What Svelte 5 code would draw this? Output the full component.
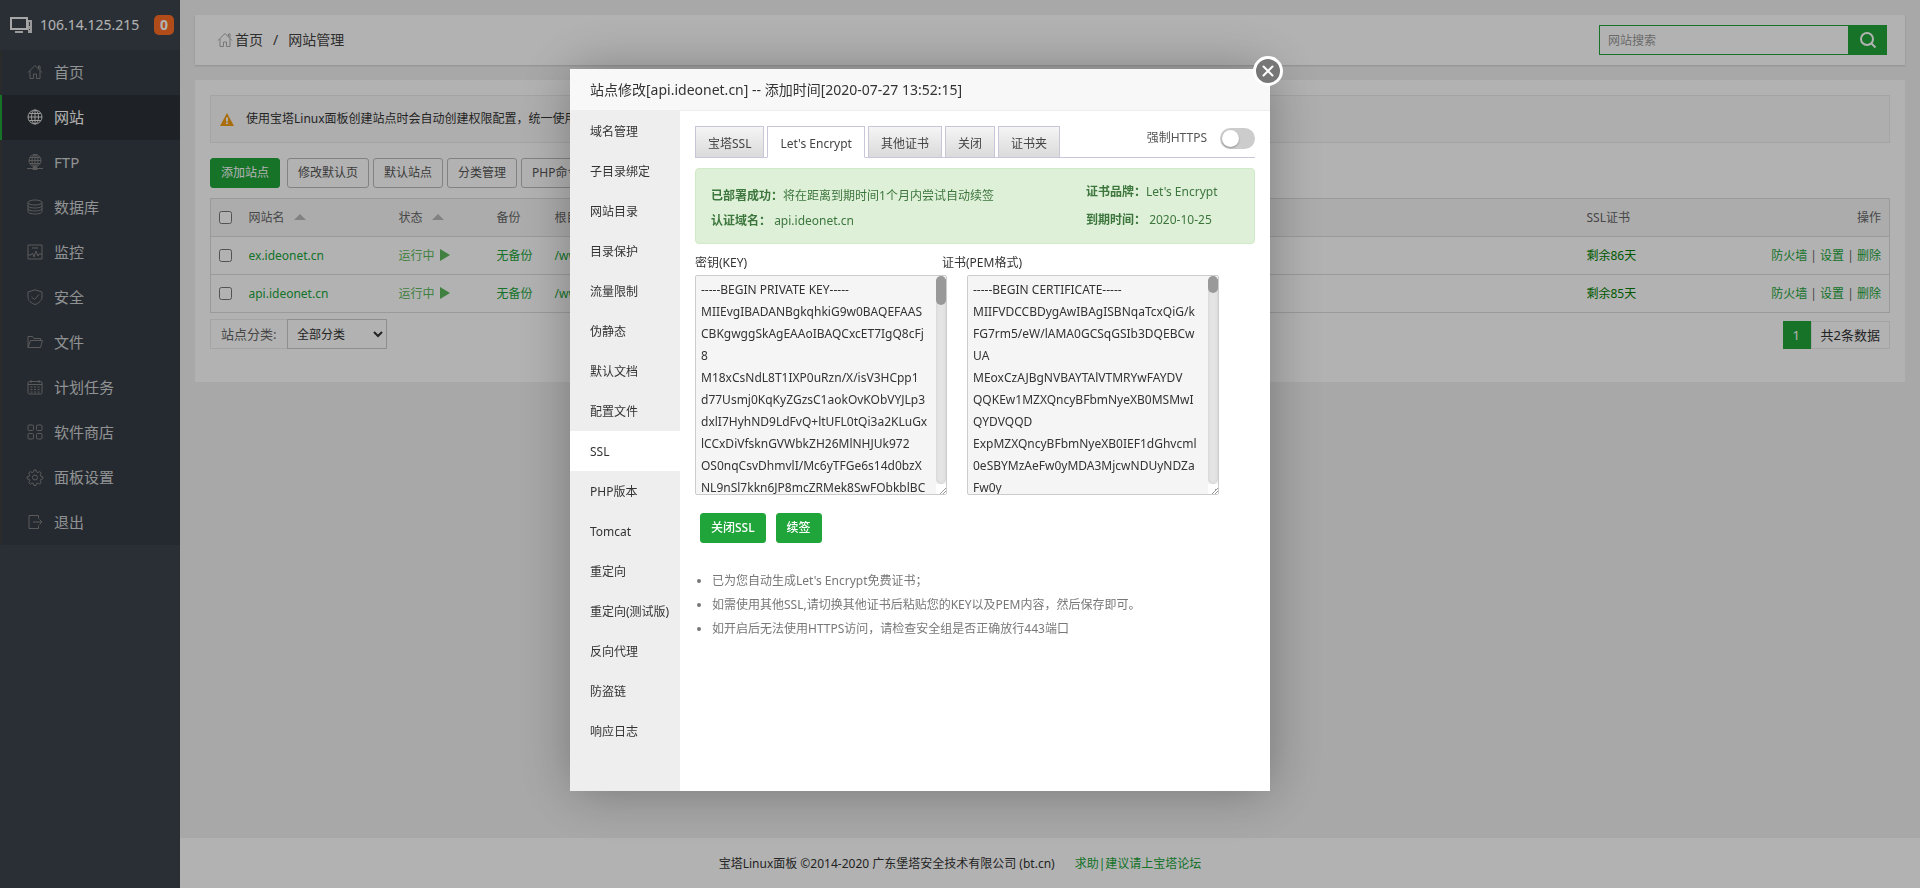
<script lang="ts">
	const menu = [
		{ name: '首页', icon: 'home' },
		{ name: '网站', icon: 'globe' },
		{ name: 'FTP', icon: 'ftp' },
		{ name: '数据库', icon: 'database' },
		{ name: '监控', icon: 'monitor' },
		{ name: '安全', icon: 'shield' },
		{ name: '文件', icon: 'folder' },
		{ name: '计划任务', icon: 'calendar' },
		{ name: '软件商店', icon: 'grid' },
		{ name: '面板设置', icon: 'gear' },
		{ name: '退出', icon: 'exit' }
	];

	const toolbar = ['修改默认页', '默认站点', '分类管理', 'PHP命令'];

	const sites = [
		{ name: 'ex.ideonet.cn', path: '/www', days: 86 },
		{ name: 'api.ideonet.cn', path: '/www', days: 85 }
	];

	const sections = [
		'域名管理',
		'子目录绑定',
		'网站目录',
		'目录保护',
		'流量限制',
		'伪静态',
		'默认文档',
		'配置文件',
		'SSL',
		'PHP版本',
		'Tomcat',
		'重定向',
		'重定向(测试版)',
		'反向代理',
		'防盗链',
		'响应日志'
	];

	const tabs = ['宝塔SSL', "Let's Encrypt", '其他证书', '关闭', '证书夹'];

	const tips = [
		"已为您自动生成Let's Encrypt免费证书；",
		'如需使用其他SSL,请切换其他证书后粘贴您的KEY以及PEM内容，然后保存即可。',
		'如开启后无法使用HTTPS访问，请检查安全组是否正确放行443端口'
	];

	const key = `-----BEGIN PRIVATE KEY-----
MIIEvgIBADANBgkqhkiG9w0BAQEFAAS
CBKgwggSkAgEAAoIBAQCxcET7IgQ8cFj
8
M18xCsNdL8T1IXP0uRzn/X/isV3HCpp1
d77Usmj0KqKyZGzsC1aokOvKObVYJLp3
dxlI7HyhND9LdFvQ+ltUFL0tQi3a2KLuGx
lCCxDiVfsknGVWbkZH26MlNHJUk972
OS0nqCsvDhmvlI/Mc6yTFGe6s14d0bzX
NL9nSl7kkn6JP8mcZRMek8SwFObkblBC`;

	const pem = `-----BEGIN CERTIFICATE-----
MIIFVDCCBDygAwIBAgISBNqaTcxQiG/k
FG7rm5/eW/lAMA0GCSqGSIb3DQEBCw
UA
MEoxCzAJBgNVBAYTAlVTMRYwFAYDV
QQKEw1MZXQncyBFbmNyeXB0MSMwI
QYDVQQD
ExpMZXQncyBFbmNyeXB0IEF1dGhvcml
0eSBYMzAeFw0yMDA3MjcwNDUyNDZa
Fw0y`;

	let activeMenu = $state('网站');
	let activeSection = $state('SSL');
	let activeTab = $state("Let's Encrypt");
	let forceHttps = $state(false);
</script>

{#snippet icon(name)}
	<svg class="icon" viewBox="0 0 16 16" aria-hidden="true">
		{#if name === 'home'}
			<path d="M1 8.5 8 1.5l7 7M3 7v7.5h3.5V10h3v4.5H13V7M11.5 4.500V2h1.500v4" />
		{:else if name === 'globe'}
			<circle cx="8" cy="8" r="7" />
			<ellipse cx="8" cy="8" rx="3.500" ry="7" />
			<path d="M8 1v14M1 8h14M2.200 4.500h11.600M2.200 11.500h11.600" />
		{:else if name === 'ftp'}
			<circle cx="8" cy="6.500" r="6" />
			<ellipse cx="8" cy="6.500" rx="3" ry="6" />
			<path d="M8 .5v14M2 6.500h12M3 3.500h10M3 9.500h10M0 14.500h16M6 13.500h4v2H6z" />
		{:else if name === 'database'}
			<ellipse cx="8" cy="3.500" rx="7" ry="2.500" />
			<path
				d="M1 3.500v9C1 14 4 15 8 15s7-1 7-2.500v-9M1 6.500C1 8 4 9 8 9s7-1 7-2.500M1 9.500C1 11 4 12 8 12s7-1 7-2.500"
			/>
		{:else if name === 'monitor'}
			<path d="M1 1h14v14H1zM5 4h6M1 11h3l1.500-2 1.500 4 2-6 2 5 1-2h3" />
		{:else if name === 'shield'}
			<path d="M8 .8 15 3v5c0 3.500-3 6-7 7.500C4 14 1 11.500 1 8V3zM4.500 8 7.500 10.500 12 5.500" />
		{:else if name === 'folder'}
			<path d="M1 13.500V2.500h4.500l1.500 2h6.500v2M1 13.500l2.500-7h12l-2 7z" />
		{:else if name === 'calendar'}
			<rect x="1" y="2.500" width="14" height="12.500" rx="1.500" />
			<path
				d="M1 5.500h14M4 1v3M12 1v3M3.500 8h2M7 8h2M10.500 8h2M3.500 10.500h2M7 10.500h2M10.500 10.500h2M3.500 13h2M7 13h2M10.500 13h2"
			/>
		{:else if name === 'grid'}
			<rect x="1" y="1" width="5.500" height="5.500" rx="1" />
			<rect x="9.500" y="1" width="5.500" height="5.500" rx="1" />
			<rect x="1" y="9.500" width="5.500" height="5.500" rx="1" />
			<rect x="9.500" y="9.500" width="5.500" height="5.500" rx="1" />
		{:else if name === 'gear'}
			<path
				d="M6.900 1h2.200l.4 2 1.500.6 1.700-1.100 1.600 1.600-1.100 1.700.6 1.500 2 .4v2.200l-2 .4-.6 1.500 1.100 1.700-1.600 1.600-1.700-1.100-1.500.6-.4 2H6.900l-.4-2-1.500-.6-1.700 1.100-1.600-1.600 1.100-1.700-.6-1.500-2-.4V7.700l2-.4.6-1.500-1.100-1.700 1.600-1.600L5 3.600 6.500 3z"
			/>
			<circle cx="8" cy="8.500" r="2.500" />
		{:else if name === 'exit'}
			<path d="M11.500 4.500V1.500H2v13h9.500v-3M6 8h9M12.500 5.500 15 8l-2.500 2.500" />
		{/if}
	</svg>
{/snippet}

<div class="page">
	<aside class="sidebar">
		<h3 class="server">
			<svg width="23" height="16" viewBox="0 0 23 16" aria-hidden="true">
				<rect x="1" y="1" width="16" height="11" fill="none" stroke="#eee" stroke-width="2" />
				<path d="M5 14h8v2H5zM18 3h4v13h-4z" fill="#ddd" />
				<path d="M19.500 5v4M19.500 12v1" stroke="#555" />
			</svg>
			<span class="ip">106.14.125.215</span>
			<span class="count">0</span>
		</h3>
		<nav>
			{#each menu as item}
				<a
					href="#{item.icon}"
					class:current={activeMenu === item.name}
					onclick={() => (activeMenu = item.name)}
				>
					{@render icon(item.icon)}
					{item.name}
				</a>
			{/each}
		</nav>
	</aside>

	<div class="main">
		<header class="topbar">
			<div class="crumbs">
				<a href="#home">{@render icon('home')}首页</a>
				<span class="sep">/</span>
				<span>网站管理</span>
			</div>
			<form class="search" onsubmit={(e) => e.preventDefault()}>
				<input type="text" placeholder="网站搜索" aria-label="网站搜索" />
				<button type="submit" aria-label="搜索">
					<svg width="18" height="18" viewBox="0 0 18 18" aria-hidden="true">
						<circle cx="8" cy="8" r="6" fill="none" stroke="#fff" stroke-width="2" />
						<path d="m12.500 12.500 4 4" stroke="#fff" stroke-width="2" />
					</svg>
				</button>
			</form>
		</header>

		<section class="content">
			<div class="notice">
				<svg width="14" height="13" viewBox="0 0 14 13" aria-hidden="true">
					<path d="M7 0 14 13H0z" fill="#f39c12" />
					<path d="M7 4.500v4M7 9.500v1.500" stroke="#fff" stroke-width="2" />
				</svg>
				<span>使用宝塔Linux面板创建站点时会自动创建权限配置，统一使用</span>
			</div>

			<div class="toolbar">
				<button class="btn primary">添加站点</button>
				{#each toolbar as label}
					<button class="btn">{label}</button>
				{/each}
			</div>

			<table>
				<thead>
					<tr>
						<th class="check"><input type="checkbox" aria-label="全选" /></th>
						<th class="name">网站名 <i class="sort"></i></th>
						<th class="state">状态 <i class="sort"></i></th>
						<th class="backup">备份</th>
						<th class="path">根目录</th>
						<th class="ssl">SSL证书</th>
						<th class="ops">操作</th>
					</tr>
				</thead>
				<tbody>
					{#each sites as site}
						<tr>
							<td><input type="checkbox" aria-label={site.name} /></td>
							<td><a href="#site">{site.name}</a></td>
							<td><a class="running" href="#state">运行中 <i class="play"></i></a></td>
							<td><a href="#backup">无备份</a></td>
							<td><a href="#path">{site.path}</a></td>
							<td><a class="days" href="#ssl">剩余{site.days}天</a></td>
							<td class="ops">
								<a href="#firewall">防火墙</a> | <a href="#set">设置</a> | <a href="#del">删除</a>
							</td>
						</tr>
					{/each}
				</tbody>
			</table>

			<div class="table-foot">
				<div class="filter">
					<label for="site-type">站点分类:</label>
					<select id="site-type">
						<option>全部分类</option>
						<option>默认分类</option>
					</select>
				</div>
				<div class="pager">
					<span class="num">1</span>
					<span class="total">共2条数据</span>
				</div>
			</div>
		</section>

		<footer>
			<span>宝塔Linux面板 ©2014-2020 广东堡塔安全技术有限公司 (bt.cn)</span>
			<a href="#forum">求助|建议请上宝塔论坛</a>
		</footer>
	</div>
</div>

<div class="shade">
	<div class="modal" role="dialog" aria-labelledby="modal-title">
		<button class="close" aria-label="关闭窗口">
			<svg width="30" height="30" viewBox="0 0 30 30" aria-hidden="true">
				<circle cx="15" cy="15" r="13.500" fill="#777" stroke="#fff" stroke-width="3" />
				<path d="m10.500 10.500 9 9m0-9-9 9" stroke="#fff" stroke-width="2" stroke-linecap="round" />
			</svg>
		</button>
		<h2 id="modal-title">站点修改[api.ideonet.cn] -- 添加时间[2020-07-27 13:52:15]</h2>
		<div class="modal-body">
			<div class="sections">
				{#each sections as section}
					<button class:on={activeSection === section} onclick={() => (activeSection = section)}>
						{section}
					</button>
				{/each}
			</div>

			<div class="pane">
				<div class="tabs">
					{#each tabs as tab}
						<button class:on={activeTab === tab} onclick={() => (activeTab = tab)}>{tab}</button>
					{/each}
					<label class="https">
						强制HTTPS
						<input type="checkbox" bind:checked={forceHttps} />
						<span class="switch"></span>
					</label>
				</div>

				<div class="status">
					<div class="result">
						<p><b>已部署成功：</b>将在距离到期时间1个月内尝试自动续签</p>
						<p><b>认证域名：</b> api.ideonet.cn</p>
					</div>
					<div class="brand">
						<p><b>证书品牌：</b>Let's Encrypt</p>
						<p><b>到期时间：</b> 2020-10-25</p>
					</div>
				</div>

				<div class="labels">
					<label for="key">密钥(KEY)</label>
					<label for="pem">证书(PEM格式)</label>
				</div>
				<div class="certs">
					<div class="cert">
						<textarea id="key" wrap="off" readonly value={key}></textarea>
						<div class="scroll"><i class="thumb"></i></div>
						<i class="grip"></i>
					</div>
					<div class="cert">
						<textarea id="pem" wrap="off" readonly value={pem}></textarea>
						<div class="scroll"><i class="thumb short"></i></div>
						<i class="grip"></i>
					</div>
				</div>

				<div class="actions">
					<button class="btn primary">关闭SSL</button>
					<button class="btn primary">续签</button>
				</div>

				<ul class="tips">
					{#each tips as tip}
						<li>{tip}</li>
					{/each}
				</ul>
			</div>
		</div>
	</div>
</div>

<style>
	:global(body) {
		background: #f1f1f1;
		color: #333;
		font: 12px/18px 'Noto Sans', 'Noto Sans CJK SC', sans-serif;
	}

	:global(*) {
		box-sizing: border-box;
	}

	button,
	input,
	select,
	textarea {
		font: inherit;
		color: inherit;
		margin: 0;
	}

	button {
		cursor: pointer;
	}

	a {
		color: #20a53a;
		text-decoration: none;
	}

	.page {
		display: flex;
		min-height: 100vh;
	}

	.icon {
		width: 16px;
		height: 16px;
		fill: none;
		stroke: currentColor;
		flex: none;
		overflow: visible;
	}

	/* sidebar */
	.sidebar {
		width: 180px;
		flex: none;
		background: #3c444d;
	}

	.server {
		display: flex;
		align-items: center;
		height: 50px;
		margin: 0;
		padding: 0 6px 0 10px;
		font-weight: normal;
		font-size: 14px;
		color: #fff;
	}

	.ip {
		margin-left: 7px;
	}

	.count {
		width: 20px;
		margin-left: auto;
		border-radius: 5px;
		background: #fc6d26;
		font-weight: bold;
		line-height: 20px;
		text-align: center;
	}

	nav a {
		display: flex;
		align-items: center;
		gap: 11px;
		height: 45px;
		padding: 0 0 2px 25px;
		border-left: 2px solid #3b3f3e;
		background: #363d45;
		color: #cfd1d3;
		font-size: 15px;
	}

	nav .icon {
		stroke: #828282;
	}

	nav a.current {
		border-left-color: #20a53a;
		background: #2c3137;
		color: #fff;
	}

	nav a.current .icon {
		stroke: #ddd;
	}

	/* content */
	.main {
		flex: 1;
		display: flex;
		flex-direction: column;
		gap: 15px;
		padding-top: 15px;
		min-width: 0;
	}

	.topbar {
		display: flex;
		align-items: center;
		justify-content: space-between;
		height: 50px;
		margin: 0 15px;
		padding: 0 18px 0 22px;
		background: #fff;
		box-shadow: 0 1px 2px #ccc;
	}

	.crumbs,
	.crumbs a {
		display: flex;
		align-items: center;
		color: #444;
		font-size: 14px;
	}

	.crumbs .icon {
		stroke: #aaa;
		margin-right: 2px;
	}

	.sep {
		margin: 0 10px;
	}

	.search {
		display: flex;
	}

	.search input {
		width: 250px;
		height: 30px;
		padding: 0 8px;
		border: 1px solid #20a53a;
		background: #fff;
	}

	.search input::placeholder {
		color: #999;
	}

	.search button {
		display: grid;
		place-items: center;
		width: 38px;
		border: 0;
		background: #20a53a;
	}

	.content {
		margin: 0 15px;
		padding: 15px 15px 33px;
		background: #fff;
	}

	.notice {
		display: flex;
		align-items: center;
		gap: 12px;
		height: 48px;
		padding-left: 9px;
		border: 1px solid #ebebeb;
		background: #fafafa;
	}

	.toolbar {
		display: flex;
		gap: 4px;
		margin: 15px 0 10px;
	}

	.btn {
		height: 30px;
		padding: 0 10px;
		border: 1px solid #bbb;
		border-radius: 3px;
		background: #fff;
		color: #555;
		line-height: 18px;
	}

	.btn.primary {
		border-color: #20a53a;
		background: #20a53a;
		color: #fff;
	}

	.toolbar .primary {
		margin-right: 3px;
	}

	table {
		width: 100%;
		table-layout: fixed;
		border-collapse: collapse;
		border: 1px solid #ddd;
		color: #666;
	}

	th,
	td {
		height: 38px;
		padding: 0 8px;
		border-bottom: 1px solid #ddd;
		font-weight: normal;
		text-align: left;
		white-space: nowrap;
	}

	th {
		background: #f6f6f6;
	}

	td input,
	th input {
		display: block;
		width: 13px;
		height: 13px;
	}

	.check {
		width: 30px;
	}

	.name {
		width: 150px;
	}

	.state {
		width: 98px;
	}

	.backup {
		width: 58px;
	}

	.path {
		width: 1032px;
	}

	.ssl {
		width: 130px;
	}

	.ops {
		text-align: right;
	}

	.sort {
		display: inline-block;
		margin: 0 0 2px 6px;
		border: 6px solid transparent;
		border-top: 0;
		border-bottom-color: #bbb;
	}

	.running {
		color: #5cb85c;
	}

	.play {
		display: inline-block;
		vertical-align: middle;
		margin: -2px 0 0 2px;
		border: 6px solid transparent;
		border-left: 10px solid #5cb85c;
		border-right: 0;
	}

	.days {
		color: #008000;
	}

	.table-foot {
		display: flex;
		justify-content: space-between;
		align-items: flex-end;
		margin-top: 6px;
	}

	.filter {
		display: flex;
		height: 30px;
	}

	.filter label {
		width: 77px;
		padding-left: 10px;
		border: 1px solid #ebebeb;
		border-right: 0;
		color: #666;
		font-size: 13px;
		line-height: 28px;
	}

	.filter select {
		width: 100px;
		padding: 0 5px;
		border: 1px solid #ccc;
		background: #fff;
		border-radius: 0;
	}

	.pager {
		display: flex;
		font-size: 13px;
		line-height: 26px;
	}

	.pager span {
		padding: 0 9px;
		border: 1px solid #ebebeb;
	}

	.pager .num {
		width: 28px;
		border-color: #20a53a;
		background: #20a53a;
		color: #fff;
	}

	footer {
		display: flex;
		justify-content: center;
		gap: 20px;
		margin-top: auto;
		padding: 17px 180px 15px 0;
		background: #fff;
	}

	/* dialog */
	.shade {
		position: fixed;
		inset: 0;
		display: flex;
		justify-content: center;
		align-items: flex-start;
		padding: 69px 80px 0 0;
		background: rgba(0, 0, 0, 0.3);
	}

	.modal {
		position: relative;
		display: flex;
		flex-direction: column;
		width: 700px;
		min-height: 722px;
		background: #fff;
		box-shadow: 1px 1px 50px rgba(0, 0, 0, 0.3);
	}

	.close {
		position: absolute;
		top: -13px;
		right: -13px;
		height: 30px;
		padding: 0;
		border: 0;
		background: none;
	}

	h2 {
		margin: 0;
		padding-left: 20px;
		border-bottom: 1px solid #eee;
		background: #f8f8f8;
		font-size: 14px;
		font-weight: normal;
		line-height: 41px;
	}

	.modal-body {
		flex: 1;
		display: flex;
	}

	.sections {
		width: 110px;
		flex: none;
		background: #eee;
	}

	.sections button {
		display: block;
		width: 100%;
		height: 40px;
		padding: 2px 0 0 20px;
		border: 0;
		background: none;
		text-align: left;
		white-space: nowrap;
	}

	.sections .on {
		background: #fff;
	}

	.pane {
		flex: 1;
		padding: 15px;
	}

	.tabs {
		display: flex;
		gap: 3px;
		border-bottom: 1px solid #c9c6d8;
	}

	.tabs button {
		height: 32px;
		margin-bottom: -1px;
		padding: 4px 12px 0;
		border: 1px solid #c9c6d8;
		background: linear-gradient(#f5f5f5, #dadada);
		color: #444;
	}

	.tabs .on {
		border-bottom-color: #fff;
		background: #fff;
	}

	.https {
		display: flex;
		align-items: center;
		height: 24px;
		margin-left: auto;
		color: #555;
	}

	.https input {
		appearance: none;
		width: 0;
		height: 0;
	}

	.switch {
		width: 35px;
		height: 21px;
		margin-left: 13px;
		padding: 2px;
		border-radius: 11px;
		background: #ccc;
	}

	.switch::before {
		content: '';
		display: block;
		width: 17px;
		height: 17px;
		border-radius: 50%;
		background: #fff;
		box-shadow: 0 1px 2px rgba(0, 0, 0, 0.3);
	}

	.https input:checked + .switch {
		background: #20a53a;
	}

	.https input:checked + .switch::before {
		margin-left: 14px;
	}

	.status {
		display: flex;
		justify-content: space-between;
		align-items: center;
		height: 76px;
		margin-top: 10px;
		padding: 0 32px 0 15px;
		border: 1px solid #d0e9c6;
		border-radius: 4px;
		background: #dff0d8;
		color: #3c763d;
	}

	.status p {
		margin: 0;
		line-height: 28px;
	}

	.result {
		padding-top: 4px;
	}

	.status .result p {
		line-height: 25px;
	}

	.brand {
		width: 136px;
		white-space: nowrap;
	}

	.labels {
		display: grid;
		grid-template-columns: 247px 1fr;
		margin-top: 10px;
		line-height: 18px;
	}

	.certs {
		display: flex;
		gap: 20px;
		margin-top: 3px;
	}

	.cert {
		position: relative;
		width: 252px;
		height: 220px;
	}

	.cert textarea {
		display: block;
		width: 100%;
		height: 100%;
		padding: 3px 5px;
		border: 1px solid #ccc;
		border-radius: 2px;
		background: #f5f5f5;
		line-height: 22px;
		overflow: hidden;
		resize: none;
	}

	.scroll {
		position: absolute;
		top: 1px;
		right: 1px;
		bottom: 11px;
		width: 10px;
		border-radius: 5px;
		background: #e4e4e4;
		box-shadow: inset 0 0 3px #ccc;
	}

	.thumb {
		display: block;
		height: 29px;
		border-radius: 5px;
		background: #999;
	}

	.thumb.short {
		height: 17px;
	}

	.grip {
		position: absolute;
		right: 1px;
		bottom: 1px;
		width: 10px;
		height: 10px;
		background: linear-gradient(135deg, #fff 65%, #999 65%, #999 72%, #fff 72%, #fff 80%, #999 80%, #999 87%, #fff 87%);
	}

	.actions {
		display: flex;
		gap: 10px;
		margin: 18px 0 26px 5px;
	}

	.actions .btn {
		font-weight: 500;
	}

	.tips {
		margin: 0;
		padding-left: 17px;
		color: #777;
		line-height: 24px;
	}
</style>
